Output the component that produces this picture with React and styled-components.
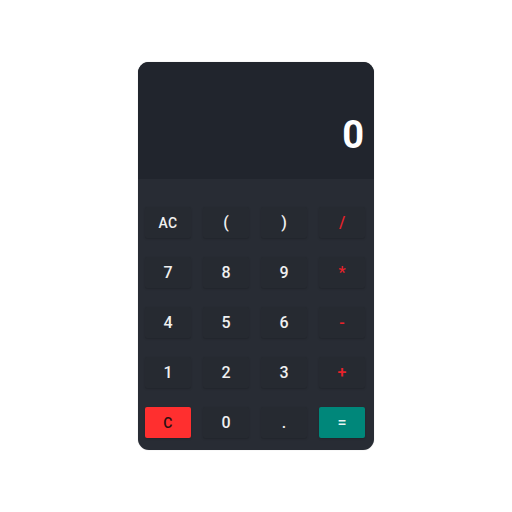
import React from "react";
import styled, { createGlobalStyle } from "styled-components";

const Global = createGlobalStyle`
  html, body { margin: 0; padding: 0; background: #ffffff; }
  body {
    min-height: 100vh;
    display: flex;
    align-items: center;
    justify-content: center;
    font-family: Roboto, "Liberation Sans", sans-serif;
  }
`;

const Card = styled.div`
  width: 236px;
  height: 388px;
  border-radius: 11px;
  overflow: hidden;
  display: flex;
  flex-direction: column;
  background: #282c34;
  box-shadow: 0 0 1px rgba(0,0,0,0.3);
`;

const Display = styled.div`
  height: 117px;
  background: #21252d;
  display: flex;
  align-items: center;
  justify-content: flex-end;
  padding: 29px 10px 0 10px;
  box-sizing: border-box;
  color: #ffffff;
  font-size: 38px;
  font-weight: 700;
`;

const Keypad = styled.div`
  flex: 1;
  display: grid;
  grid-template-columns: repeat(4, 1fr);
  grid-auto-rows: 31px;
  column-gap: 12px;
  row-gap: 19px;
  padding: 28px 9px 12px 7px;
`;

const Key = styled.button`
  border: none;
  border-radius: 2px;
  font-family: Roboto, "Liberation Sans", sans-serif;
  font-size: ${p => (p.$small ? "14px" : "16px")};
  font-weight: 500;
  letter-spacing: ${p => (p.$small ? "0.3px" : "0")};
  padding: 0;
  display: flex;
  align-items: center;
  justify-content: center;
  background: ${p => p.$bg || "#262a31"};
  color: ${p => p.$color || "#f0f0f0"};
  box-shadow: 0 1px 2px rgba(0,0,0,0.18);
`;

const keys = [
  { t: "AC", small: true }, { t: "(" }, { t: ")" }, { t: "/", op: true },
  { t: "7" }, { t: "8" }, { t: "9" }, { t: "*", op: true },
  { t: "4" }, { t: "5" }, { t: "6" }, { t: "-", op: true },
  { t: "1" }, { t: "2" }, { t: "3" }, { t: "+", op: true },
  { t: "C", small: true, bg: "#ff2f2f", color: "#2a1010" }, { t: "0" }, { t: "." },
  { t: "=", bg: "#00877a", color: "#e8f5f3" },
];

export default function App() {
  return (
    <>
      <Global />
      <Card>
        <Display>0</Display>
        <Keypad>
          {keys.map((k, i) => (
            <Key
              key={i}
              $small={k.small}
              $bg={k.bg}
              $color={k.op ? "#e8222a" : k.color}
            >
              {k.t}
            </Key>
          ))}
        </Keypad>
      </Card>
    </>
  );
}
